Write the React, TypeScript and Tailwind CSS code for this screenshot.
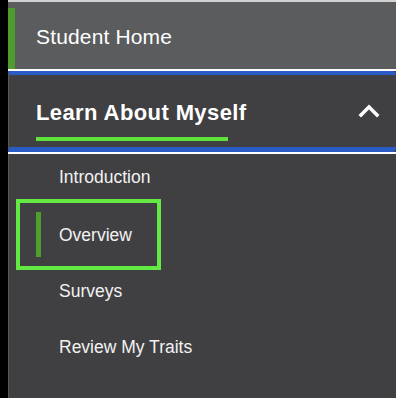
const subItems = [
  { label: 'Introduction', h: 'h-[45px]' },
  { label: 'Overview', active: true },
  { label: 'Surveys', h: 'h-[42px]' },
  { label: 'Review My Traits', h: 'h-[70px]' },
];

const App = () => {
  return (
    <div className="flex w-[396px] h-[398px] bg-black overflow-hidden font-['Liberation_Sans',Arial,sans-serif]">
      <div className="w-2 shrink-0 bg-black" />

      <div className="flex-1 flex flex-col bg-[#404042]">
        <div className="h-[2px] bg-[#d2d2d2]" />

        {/* top level link */}
        <div className="h-[67px] flex bg-[#5b5c5e]">
          <div className="w-[7px] h-[61px] self-end bg-[#4f9d2d]" />
          <span className="pl-[21px] pt-[23px] text-[21px] leading-6 tracking-[0.15px] text-white">Student Home</span>
        </div>

        {/* expanded section header, focused */}
        <div className="border-y-2 border-white">
          <div className="h-[81px] flex items-start justify-between border-t-4 border-b-[5px] border-[#2b5cc6] rounded-r-[4px] border-l border-l-[#58585a] pl-[27px] pr-[16px] pt-[26px]">
            <div className="flex flex-col">
              <span className="text-[22px] leading-6 font-bold tracking-[0.4px] text-white">Learn About Myself</span>
              <div className="mt-3 h-1 w-[192px] bg-[#5fe23c]" />
            </div>
            <svg width="22" height="14" viewBox="0 0 22 14" className="mt-[3px]">
              <polyline points="3,11 11,3 19,11" fill="none" stroke="white" strokeWidth="3.5" strokeLinecap="square" />
            </svg>
          </div>
        </div>

        {/* sub items */}
        <div className="flex-1 flex flex-col border-l border-[#58585a]">
          {subItems.map((item) =>
            item.active ? (
              <div
                key={item.label}
                className="ml-[7px] w-[145px] h-[71px] flex items-center border-4 border-[#63ea45]"
              >
                <div className="ml-4 w-[5px] h-[45px] bg-[#4f9d2d]" />
                <span className="ml-[18px] text-[17.5px] leading-6 text-[#f2f2f2]">{item.label}</span>
              </div>
            ) : (
              <div key={item.label} className={`${item.h} flex items-center pl-[50px]`}>
                <span className="text-[17.5px] leading-6 text-[#f2f2f2]">{item.label}</span>
              </div>
            )
          )}
        </div>
      </div>
    </div>
  );
};

export default App;
